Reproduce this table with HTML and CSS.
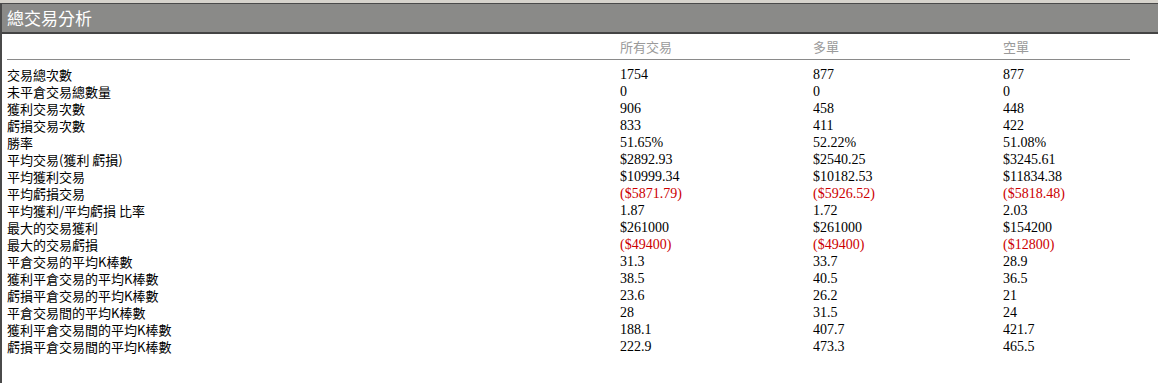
FILE: index.html
```html
<!DOCTYPE html>
<html lang="zh-Hant">
<head>
<meta charset="utf-8">
<title>總交易分析</title>
<link rel="stylesheet" href="styles.css">
</head>
<body>
<div class="strip"></div>
<div class="panel">
  <div class="title">總交易分析</div>
  <div class="table">
    <div class="row head">
      <span class="label"></span><span>所有交易</span><span>多單</span><span>空單</span>
    </div>
    <div class="body">
      <div class="row"><span class="label">交易總次數</span><span>1754</span><span>877</span><span>877</span></div>
      <div class="row"><span class="label">未平倉交易總數量</span><span>0</span><span>0</span><span>0</span></div>
      <div class="row"><span class="label">獲利交易次數</span><span>906</span><span>458</span><span>448</span></div>
      <div class="row"><span class="label">虧損交易次數</span><span>833</span><span>411</span><span>422</span></div>
      <div class="row"><span class="label">勝率</span><span>51.65%</span><span>52.22%</span><span>51.08%</span></div>
      <div class="row"><span class="label">平均交易(獲利 虧損)</span><span>$2892.93</span><span>$2540.25</span><span>$3245.61</span></div>
      <div class="row"><span class="label">平均獲利交易</span><span>$10999.34</span><span>$10182.53</span><span>$11834.38</span></div>
      <div class="row neg"><span class="label">平均虧損交易</span><span>($5871.79)</span><span>($5926.52)</span><span>($5818.48)</span></div>
      <div class="row"><span class="label">平均獲利/平均虧損 比率</span><span>1.87</span><span>1.72</span><span>2.03</span></div>
      <div class="row"><span class="label">最大的交易獲利</span><span>$261000</span><span>$261000</span><span>$154200</span></div>
      <div class="row neg"><span class="label">最大的交易虧損</span><span>($49400)</span><span>($49400)</span><span>($12800)</span></div>
      <div class="row"><span class="label">平倉交易的平均K棒數</span><span>31.3</span><span>33.7</span><span>28.9</span></div>
      <div class="row"><span class="label">獲利平倉交易的平均K棒數</span><span>38.5</span><span>40.5</span><span>36.5</span></div>
      <div class="row"><span class="label">虧損平倉交易的平均K棒數</span><span>23.6</span><span>26.2</span><span>21</span></div>
      <div class="row"><span class="label">平倉交易間的平均K棒數</span><span>28</span><span>31.5</span><span>24</span></div>
      <div class="row"><span class="label">獲利平倉交易間的平均K棒數</span><span>188.1</span><span>407.7</span><span>421.7</span></div>
      <div class="row"><span class="label">虧損平倉交易間的平均K棒數</span><span>222.9</span><span>473.3</span><span>465.5</span></div>
    </div>
  </div>
</div>
</body>
</html>
```
FILE: styles.css
```css
html, body {
  margin: 0;
  padding: 0;
  background: #ffffff;
}
body {
  width: 1158px;
  height: 383px;
  overflow: hidden;
  font-family: "Liberation Serif", "Noto Sans CJK TC", serif;
  font-size: 14px;
  color: #000;
}
.strip {
  height: 3px;
  background: #d6d3cc;
}
.panel {
  border-left: 2px solid #4a4a4a;
  height: 380px;
  box-sizing: border-box;
}
.title {
  height: 31px;
  box-sizing: border-box;
  border-top: 1px solid #4a4a4a;
  border-bottom: 2px solid #444;
  background: #8a8a88;
  color: #fff;
  font-family: "Noto Sans CJK TC", sans-serif;
  font-size: 17px;
  line-height: 27px;
  padding-left: 5px;
}
.table {
  padding-left: 5px;
}
.row {
  display: grid;
  grid-template-columns: 613px 193px 190px 1fr;
  height: 17px;
  line-height: 17px;
  white-space: nowrap;
}
.row.head {
  height: 25px;
  line-height: 25px;
  color: #9a9a9a;
  font-family: "Noto Sans CJK TC", sans-serif;
  font-size: 13px;
  border-bottom: 1px solid #8a8a8a;
  margin-right: 28px;
}
.body {
  padding-top: 6px;
}
.label {
  font-family: "Noto Sans CJK TC", sans-serif;
  font-size: 13px;
}
.row.neg span:not(.label) {
  color: #cc0000;
}
```
